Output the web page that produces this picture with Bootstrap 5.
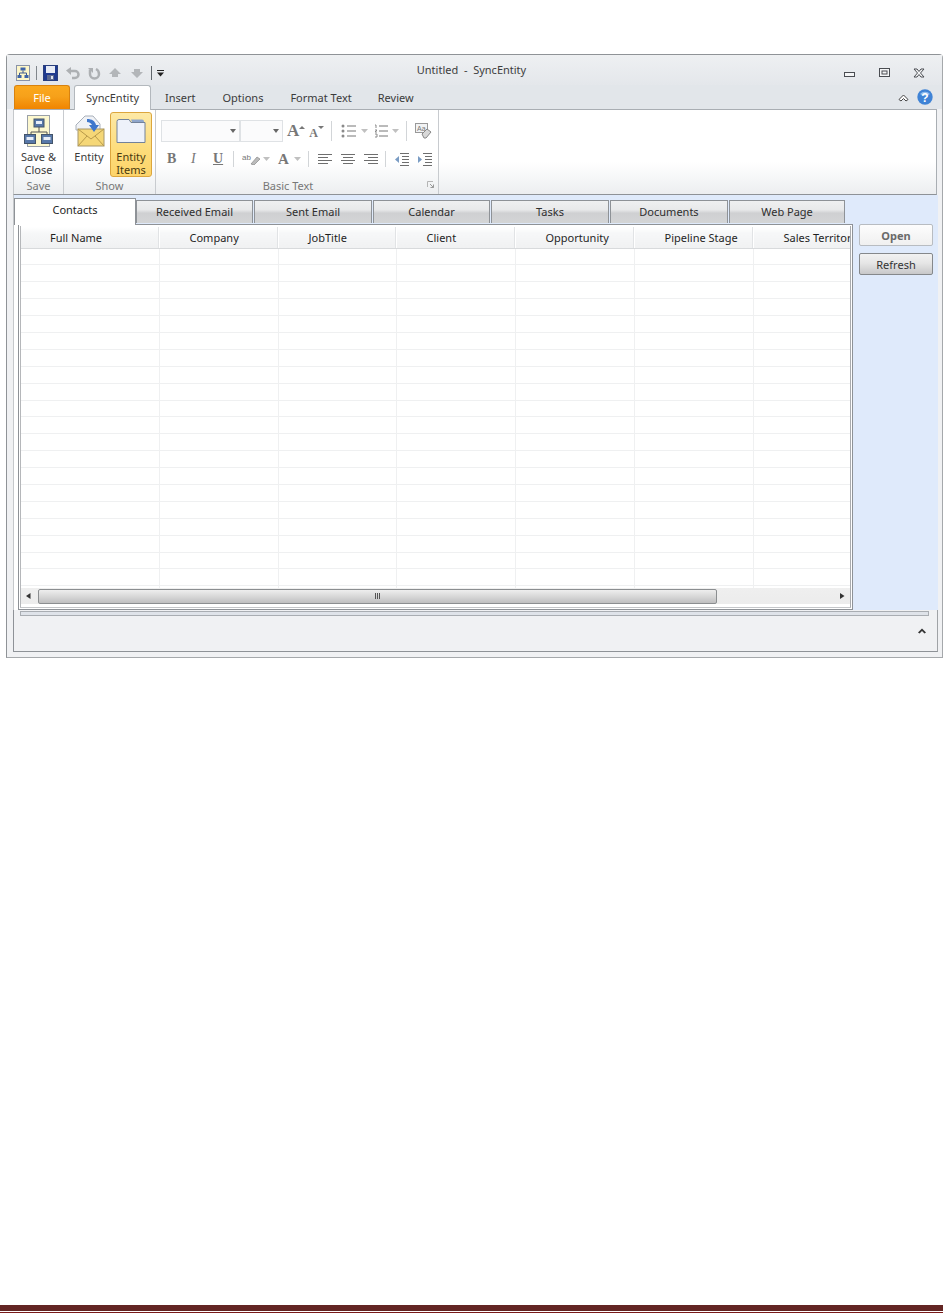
<!DOCTYPE html>
<html lang="en">
<head>
<meta charset="utf-8">
<title>Untitled - SyncEntity</title>
<link href="https://cdn.jsdelivr.net/npm/bootstrap@5.3.0/dist/css/bootstrap.min.css" rel="stylesheet">
<style>
html,body{height:100%}
body{margin:0;background:#fff;font-family:"Noto Sans","Liberation Sans",sans-serif;font-size:11px;line-height:13px;color:#3b3b3b;overflow:hidden}
.sheet{height:1313px;padding:54px 0 0 6px}
.win{width:937px;height:604px;border:1px solid #8f9397;border-bottom-color:#a5a8ab;border-right-color:#a5a8ab;border-radius:4px 4px 0 0;background:#f0f1f3;padding:0 5px 5px 6px;position:relative}
.titlebar{height:30px;margin:0 -5px 0 -6px;padding:10px 5px 0 9px;background:linear-gradient(#eef0f2,#e4e7eb)}
.qat{width:150px;gap:0}
.qat svg{display:block;flex:none}
.wtitle{flex:1;text-align:center;margin-top:-2px;margin-left:-2px;padding-right:65px;color:#3d3d3d;white-space:pre}
.wbtns{gap:22.5px;padding:3px 12px 0 0;align-items:flex-start}
.tabbar{height:24px;margin:0 -5px 0 -6px;padding-left:7px;background:#e2e6ea;position:relative;z-index:1}
.tfile{width:56px;height:24px;border:1px solid #d8820f;border-bottom:0;border-radius:3px 3px 0 0;background:linear-gradient(#fba81d,#f7a11a 45%,#f08400);color:#fff;text-align:center;line-height:24px}
.tsync{width:77px;height:25px;margin-left:4px;border:1px solid #b3b8bd;border-bottom:0;border-radius:3px 3px 0 0;background:#fff;text-align:center;line-height:24px;color:#3b3b3b}
.tplain{line-height:26px;color:#3b3b3b;white-space:nowrap}
.ribbon{height:86px;border:1px solid #a9aeb3;border-bottom:1px solid #8e9297;border-left-color:#c5c8cb;background:linear-gradient(#fff 0,#fff 62%,#eceef0 100%)}
.rgroup{height:100%;border-right:1px solid #c8cbcf;position:relative;display:flex;flex-direction:column;flex:none}
.rbody{flex:1;min-height:0}
.rlabel{height:17px;text-align:center;color:#777;line-height:17px}
.bigbtn{text-align:center;color:#3b3b3b;line-height:13px}
.bigbtn svg{display:block;margin:0 auto}
.hot{width:42px;height:65px;margin:2px 0 0 3px;border:1px solid #dca63e;border-radius:3px;background:linear-gradient(#fde9a6,#fddc7a 60%,#fdd46a);padding-top:5px}
.combo{height:22px;border:1px solid #dfe2e5;background:#fbfbfc;position:relative}
.caret-d{width:0;height:0;border:3.5px solid transparent;border-top:4px solid #666;border-bottom:0;position:absolute;right:3px;top:8px}
.vsep{width:1px;background:#d2d5d8;flex:none}
.letter{font-family:"Liberation Serif",serif;font-weight:700;color:#777;line-height:16px}
.body-zone{height:415px;background:#dfeafb;margin-right:-1px;border-left:1px solid #c5c8cb}
.tabs-row{height:29px;padding-top:2px;align-items:flex-end;background:#dfeafb}
.tb{height:23px;background:linear-gradient(#eff0f1,#e8e9ea 40%,#cfd0d2 55%,#d4d5d6);border:1px solid #8e9297;border-bottom:0;margin-right:1px;text-align:center;line-height:22px;color:#2e2e2e;flex:none;margin-bottom:1px}
.tb-on{height:27px;width:122px;background:#fff;border:1px solid #8e9297;border-bottom:0;text-align:center;line-height:22px;color:#1f1f1f;flex:none;position:relative;z-index:1;margin-bottom:-1px}
.leftcol{width:839px;background:#fff;height:415px}
.gridframe{margin:0 0 0 4px;width:835px;height:386px;border:1px solid #8e9297;background:#fff;padding:1px}
.gridinner{height:382px;border:1px solid #c4c6c9;border-right-color:#a9abae;border-bottom-color:#c4c6c9;border-top:0;border-left-color:#b5b7ba}
.gridclip{overflow:hidden;height:362px}
table.dg{table-layout:fixed;border-collapse:collapse;width:862px;margin:1px 0 0 0}
table.dg th{height:21px;font-weight:400;text-align:left;padding:0 0 0 30px;color:#1f1f1f;background:linear-gradient(#fff 0,#f6f7f8 30%,#f0f1f2);border-right:1px solid #fff;border-bottom:1px solid #d8dadc;white-space:nowrap;overflow:hidden;line-height:19px;box-shadow:inset -1px 0 #e1e3e5}
table.dg th:first-child{padding-left:29px}
table.dg td{height:16.9px;padding:0;border-right:1px solid #eff0f1;border-bottom:1px solid #eff0f1;background:#fff}
.hscroll{height:16px;align-items:center;background:linear-gradient(#efefef,#ececec)}
.thumb{height:15px;border:1px solid #8b8e90;border-radius:2px;background:linear-gradient(#eeeeee,#dadada 45%,#bfbfc0);width:679px}
.sidecol{width:84px;padding:29px 4px 0 6px}
.sbtn{display:block;width:74px;height:22px;padding:0;font-size:11px;line-height:19px;border-radius:2px;color:#333;font-family:inherit}
.sbtn-off{background:linear-gradient(#fdfdfd,#f0f0f0);border:1px solid #b8bcc1;font-weight:700;color:#6a6a6a;margin-bottom:7px}
.sbtn-on{background:linear-gradient(#f2f2f2,#e6e6e6 45%,#c8c8c9);border:1px solid #85888b}
.foot{height:42px;margin-right:-1px;border:1px solid #8e9297;border-top:0;border-right:1px solid #a0a3a6;background:#f0f1f3;padding:1px 6px 0 6px}
.pbar{height:5px;width:909px;background:#dfe3e9;border:1px solid #a9adb2}
.chev{padding:12px 5px 0 0}
.maroon{position:absolute;left:0;right:0;top:1305px;height:6px;background:#632523}
.maroon2{position:absolute;left:0;right:0;top:1312px;height:1px;background:#7a1a1a}
</style>
</head>
<body>
<div class="sheet">
<div class="win">
  <div class="titlebar d-flex">
    <div class="qat d-flex align-items-center" style="height:16px">
      <svg width="14" height="16" viewBox="0 0 14 16"><rect x=".5" y=".5" width="13" height="15" fill="#fdf6c8" stroke="#8a93a8"/><rect x="4.500" y="2.500" width="5" height="3" fill="#3e63a8"/><rect x="1.500" y="10" width="4" height="3" fill="#3e63a8"/><rect x="8.500" y="10" width="4" height="3" fill="#3e63a8"/><path d="M7 5.500V8M3.500 10V8h7v2" stroke="#3e5a90" fill="none"/></svg>
      <span class="vsep" style="height:14px;margin:0 6px 0 6px;background:#80868c"></span>
      <svg width="15" height="16" viewBox="0 0 15 16"><rect x=".5" y=".5" width="14" height="15" fill="#1f3a8f" stroke="#2a3f7d"/><rect x="3" y="1" width="9" height="7" fill="#e8ecf6"/><rect x="4" y="10" width="7" height="5" fill="#5d6a90"/><rect x="8" y="11" width="2" height="3" fill="#dfe4f0"/></svg>
      <svg style="margin-left:8px" width="14" height="14" viewBox="0 0 14 14"><path d="M4 5h5a3.500 3.500 0 0 1 0 7H6" stroke="#adb0b3" stroke-width="2.500" fill="none"/><path d="M5 1v8L0 4.500z" fill="#adb0b3"/></svg>
      <svg style="margin-left:7px" width="14" height="14" viewBox="0 0 14 14"><path d="M3 3.500v4.500a4.500 4.500 0 0 0 9 0c0-2-1-4-3-5" stroke="#adb0b3" stroke-width="2.500" fill="none"/><path d="M1 2h5v5z" fill="#adb0b3"/></svg>
      <svg style="margin-left:7px" width="14" height="12" viewBox="0 0 14 12"><path d="M7 1 13 7H10V10H4V7H1z" fill="#b3b6b9"/></svg>
      <svg style="margin-left:8px" width="14" height="12" viewBox="0 0 14 12"><path d="M7 11 13 5H10V2H4V5H1z" fill="#b3b6b9"/></svg>
      <span class="vsep" style="height:14px;margin:0 5px 0 7px;background:#60666c"></span>
      <svg width="7" height="7" viewBox="0 0 7 7"><path d="M0 .5h7" stroke="#222"/><path d="M0 2.500h7L3.500 6.500z" fill="#222"/></svg>
    </div>
    <div class="wtitle">Untitled  -  SyncEntity</div>
    <div class="wbtns d-flex">
      <svg width="12" height="6" viewBox="0 0 12 6" style="margin-top:4px"><rect x=".5" y=".5" width="10" height="4" fill="#f4f5f6" stroke="#4a4d52"/></svg>
      <svg width="12" height="10" viewBox="0 0 12 10"><rect x=".5" y=".5" width="10" height="8" fill="#f4f5f6" stroke="#4a4d52"/><rect x="3" y="3" width="5" height="3" fill="none" stroke="#4a4d52"/></svg>
      <svg width="12" height="10" viewBox="0 0 12 10"><path d="M1 1h3l2 2.500L8 1h3L7.500 5 11 9H8L6 6.500 4 9H1l3.500-4z" fill="#f4f5f6" stroke="#4a4d52"/></svg>
    </div>
  </div>

  <div class="tabbar d-flex">
    <div class="tfile">File</div>
    <div class="tsync">SyncEntity</div>
    <div class="tplain" style="margin-left:14px">Insert</div>
    <div class="tplain" style="margin-left:27px">Options</div>
    <div class="tplain" style="margin-left:27px">Format Text</div>
    <div class="tplain" style="margin-left:26px">Review</div>
    <div class="ms-auto d-flex align-items-start" style="padding:4px 9px 0 0;gap:8px">
      <svg style="margin-top:4px" width="11" height="9" viewBox="0 0 11 9"><path d="M1 6.500 5.500 2 10 6.500 8 8 5.500 5.500 3 8z" fill="#fff" stroke="#444"/></svg>
      <svg width="16" height="16" viewBox="0 0 16 16"><circle cx="8" cy="8" r="7.700" fill="#3f83d6"/><path d="M3 5a6 5 0 0 1 10 0c-3 2-7 2-10 0z" fill="#8fbcee"/><text x="8" y="12.500" text-anchor="middle" font-family="Liberation Sans,sans-serif" font-weight="700" font-size="12" fill="#fff">?</text></svg>
    </div>
  </div>

  <div class="ribbon d-flex">
    <div class="rgroup" style="width:50px">
      <div class="rbody bigbtn" style="padding-top:5px">
        <svg width="30" height="33" viewBox="0 0 30 33"><rect x="3.500" y=".5" width="22" height="31" fill="#fdf8cf" stroke="#9aa0a8"/><rect x="10" y="4" width="10" height="8" fill="#5878a8" stroke="#44546a"/><rect x="12" y="6" width="6" height="3" fill="#e8eef8"/><path d="M15 12v5M7 21v-4h16v4" stroke="#555" fill="none"/><rect x=".5" y="19.500" width="11" height="9" fill="#5878a8" stroke="#44546a"/><rect x="2.500" y="22" width="7" height="3" fill="#e8eef8"/><rect x="17.500" y="19.500" width="11" height="9" fill="#5878a8" stroke="#44546a"/><rect x="19.500" y="22" width="7" height="3" fill="#e8eef8"/></svg>
        <div style="margin-top:2px">Save &amp;<br>Close</div>
      </div>
      <div class="rlabel">Save</div>
    </div>
    <div class="rgroup" style="width:92px">
      <div class="rbody d-flex" style="padding-left:7px">
        <div class="bigbtn" style="width:36px;padding-top:5px">
          <svg width="31" height="32" viewBox="0 0 31 32"><path d="M2 15V10L11 1h8l7 8v6z" fill="#f0f2f6" stroke="#a9b0ba"/><rect x="4" y="14" width="26" height="17" fill="#f5d777" stroke="#a8976a"/><path d="M4 14l13 10 13-10M4 31l9-10M30 31l-9-10" stroke="#b89a4a" fill="none"/><path d="M13 4c5 0 8 2 9 6h3l-5 7-5-7h3c-1-2-3-3-5-3z" fill="#3f77cc"/></svg>
          <div style="margin-top:3px">Entity</div>
        </div>
        <div class="bigbtn hot">
          <svg width="30" height="26" viewBox="0 0 30 26"><path d="M1 3.500A2 2 0 0 1 3 1.500h10l2 3h14v20H1z" fill="#eef2fa" stroke="#72829a"/><path d="M15 1.500h11a2 2 0 0 1 2 2V4H16z" fill="#8ea6cc"/></svg>
          <div style="margin-top:6px;color:#4a3a10">Entity<br>Items</div>
        </div>
      </div>
      <div class="rlabel">Show</div>
    </div>
    <div class="rgroup" style="width:283px">
      <div class="rbody" style="padding:10px 0 0 5px">
        <div class="d-flex align-items-center" style="height:22px">
          <div class="combo" style="width:79px"><span class="caret-d"></span></div>
          <div class="combo" style="width:43px"><span class="caret-d"></span></div>
          <span class="letter" style="font-size:17px;margin-left:4px">A</span><svg width="6" height="12" viewBox="0 0 6 12"><path d="M0 4 3 1l3 3z" fill="#777"/></svg>
          <span class="letter" style="font-size:12px;margin-left:4px;padding-top:3px">A</span><svg width="6" height="12" viewBox="0 0 6 12"><path d="M0 1h6L3 4z" fill="#777"/></svg>
          <span class="vsep" style="height:20px;margin:0 9px 0 7px"></span>
          <svg width="16" height="14" viewBox="0 0 16 14"><g fill="#8a8a8a"><circle cx="2" cy="2" r="1.500"/><circle cx="2" cy="7" r="1.500"/><circle cx="2" cy="12" r="1.500"/></g><path d="M6 2h9M6 7h9M6 12h9" stroke="#777"/></svg>
          <svg style="margin-left:4px" width="7" height="4" viewBox="0 0 7 4"><path d="M0 0h7L3.500 4z" fill="#c0c0c0"/></svg>
          <svg style="margin-left:6px" width="15" height="14" viewBox="0 0 15 14"><path d="M1 1h1v3M1 6h2L1 8h2M1 10h2v3H1" stroke="#8a8a8a" fill="none"/><path d="M5 2h9M5 7h9M5 12h9" stroke="#777"/></svg>
          <svg style="margin-left:3px" width="7" height="4" viewBox="0 0 7 4"><path d="M0 0h7L3.500 4z" fill="#c0c0c0"/></svg>
          <span class="vsep" style="height:20px;margin:0 8px 0 7px"></span>
          <svg width="17" height="16" viewBox="0 0 17 16"><rect x=".5" y=".5" width="12" height="9" fill="#f2f3f4" stroke="#999"/><text x="2" y="8" font-size="7" font-family="Liberation Sans,sans-serif" fill="#777">Aa</text><path d="M7 11l5-5 4 3-5 6H9z" fill="#d8d8d8" stroke="#888"/></svg>
        </div>
        <div class="d-flex align-items-center" style="height:22px;margin-top:6px;padding-left:6px">
          <span class="letter" style="font-size:14px;width:24px">B</span>
          <span class="letter" style="font-size:14px;width:22px;font-style:italic;font-weight:400">I</span>
          <span class="letter" style="font-size:14px;width:20px;text-decoration:underline">U</span>
          <span class="vsep" style="height:16px;margin:0 8px 0 0"></span>
          <svg width="18" height="12" viewBox="0 0 18 12"><text x="0" y="7" font-size="8" font-family="Liberation Sans,sans-serif" fill="#777">ab</text><path d="M9 11l6-7 3 2-6 6z" fill="#bbb" stroke="#888" stroke-width=".7"/></svg>
          <svg style="margin-left:3px" width="7" height="4" viewBox="0 0 7 4"><path d="M0 0h7L3.500 4z" fill="#c0c0c0"/></svg>
          <span class="letter" style="font-size:15px;margin-left:8px;width:11px">A</span>
          <svg style="margin-left:5px" width="7" height="4" viewBox="0 0 7 4"><path d="M0 0h7L3.500 4z" fill="#c0c0c0"/></svg>
          <span class="vsep" style="height:16px;margin:0 9px 0 7px"></span>
          <svg width="14" height="11" viewBox="0 0 14 11"><path d="M0 .5h14M0 3.500h10M0 6.500h14M0 9.500h10" stroke="#6e6e6e"/></svg>
          <svg style="margin-left:9px" width="14" height="11" viewBox="0 0 14 11"><path d="M0 .5h14M2 3.500h10M0 6.500h14M2 9.500h10" stroke="#6e6e6e"/></svg>
          <svg style="margin-left:9px" width="14" height="11" viewBox="0 0 14 11"><path d="M0 .5h14M4 3.500h10M0 6.500h14M4 9.500h10" stroke="#6e6e6e"/></svg>
          <span class="vsep" style="height:16px;margin:0 8px 0 7px"></span>
          <svg width="15" height="13" viewBox="0 0 15 13"><path d="M6 .5h9M8 3.500h7M8 6.500h7M8 9.500h7M6 12.500h9" stroke="#6e6e6e"/><path d="M5 3 1 6.500 5 10z" fill="#7a9cc4"/></svg>
          <svg style="margin-left:8px" width="15" height="13" viewBox="0 0 15 13"><path d="M6 .5h9M8 3.500h7M8 6.500h7M8 9.500h7M6 12.500h9" stroke="#6e6e6e"/><path d="M1 3l4 3.500L1 10z" fill="#7a9cc4"/></svg>
        </div>
      </div>
      <div class="rlabel" style="position:relative;padding-right:18px">Basic Text
        <svg style="position:absolute;right:4px;top:4px" width="7" height="7" viewBox="0 0 7 7"><path d="M.5 6V.5H6" stroke="#b5b5b5" fill="none"/><path d="M3 3l3.500 3.500M3.500 6.500h3v-3" stroke="#999" fill="none"/></svg>
      </div>
    </div>
  </div>

  <div class="body-zone d-flex">
    <div class="leftcol">
      <div class="tabs-row d-flex">
        <div class="tb-on">Contacts</div>
        <div class="tb" style="width:117px">Received Email</div>
        <div class="tb" style="width:118px">Sent Email</div>
        <div class="tb" style="width:117px">Calendar</div>
        <div class="tb" style="width:118px">Tasks</div>
        <div class="tb" style="width:118px">Documents</div>
        <div class="tb" style="width:116px;margin-right:0">Web Page</div>
      </div>
      <div class="gridframe">
        <div class="gridinner">
        <div class="gridclip">
          <table class="dg">
            <colgroup><col style="width:138px"><col style="width:119px"><col style="width:118px"><col style="width:119px"><col style="width:119px"><col style="width:119px"><col style="width:130px"></colgroup>
            <thead><tr><th>Full Name</th><th>Company</th><th>JobTitle</th><th>Client</th><th>Opportunity</th><th>Pipeline Stage</th><th>Sales Territory</th></tr></thead>
            <tbody id="rows"></tbody>
          </table>
        </div>
        <div class="hscroll d-flex">
          <svg width="17" height="14" viewBox="0 0 17 14"><path d="M9.500 4v6L5 7z" fill="#333"/></svg>
          <div class="thumb d-flex align-items-center justify-content-center">
            <svg width="5" height="6" viewBox="0 0 5 6"><path d="M.5 0v6M2.500 0v6M4.500 0v6" stroke="#555"/></svg>
          </div>
          <svg class="ms-auto" width="17" height="14" viewBox="0 0 17 14"><path d="M7 4v6L11.500 7z" fill="#333"/></svg>
        </div>
        </div>
      </div>
    </div>
    <div class="sidecol">
      <button type="button" class="btn sbtn sbtn-off">Open</button>
      <button type="button" class="btn sbtn sbtn-on">Refresh</button>
    </div>
  </div>

  <div class="foot">
    <div class="pbar"></div>
    <div class="chev d-flex justify-content-end">
      <svg width="8" height="6" viewBox="0 0 8 6"><path d="M0 4.500 4 .5 8 4.500 6.500 5.500 4 3 1.500 5.500z" fill="#333"/></svg>
    </div>
  </div>
</div>
</div>
<div class="maroon"></div>
<div class="maroon2"></div>
<script>
var r=document.getElementById('rows'),h='';
for(var i=0;i<21;i++){h+='<tr>'+'<td></td>'.repeat(7)+'</tr>';}
r.innerHTML=h;
</script>
<script src="https://cdn.jsdelivr.net/npm/bootstrap@5.3.0/dist/js/bootstrap.bundle.min.js"></script>
</body>
</html>
